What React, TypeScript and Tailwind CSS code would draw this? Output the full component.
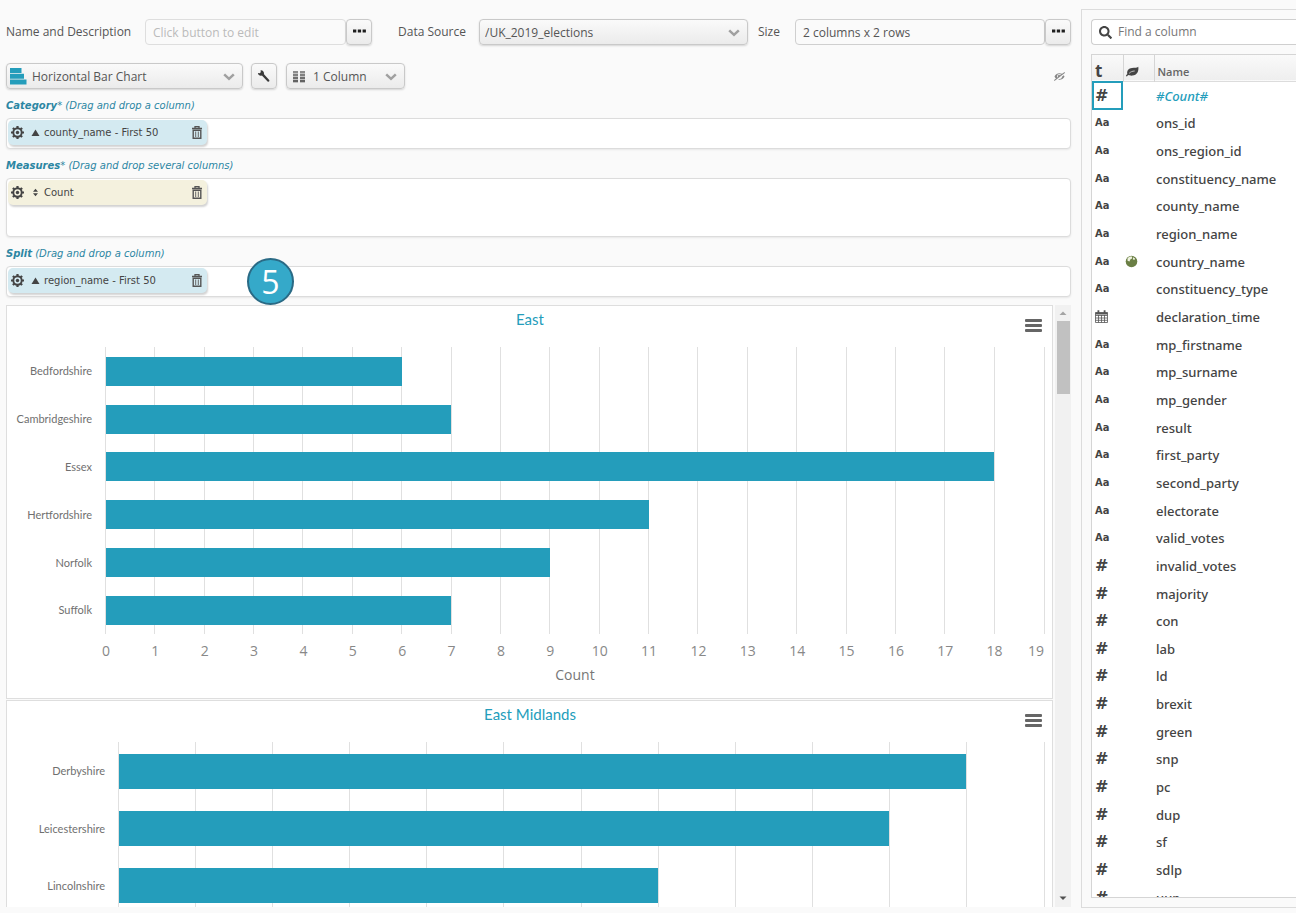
import React from "react";
import { FaSearch, FaEyeSlash } from "react-icons/fa";

const inputBase =
  "h-full w-full rounded-[4px] border bg-transparent px-[7px] text-[#555] outline-none";
const buttonBase =
  "flex h-[26px] w-[26px] shrink-0 items-center justify-center rounded-[4px] border border-[#c9c9c9] bg-linear-to-b from-[#fafafa] to-[#ebebeb] text-[#222] shadow-[0_1px_2px_rgba(0,0,0,0.15)]";
const selectBase =
  "h-[26px] w-full appearance-none rounded-[4px] border border-[#c9c9c9] bg-linear-to-b from-[#fafafa] to-[#ebebeb] pt-[2px] text-[#555] shadow-[0_1px_2px_rgba(0,0,0,0.15)] outline-none";

function Chevron() {
  return (
    <svg className="pointer-events-none absolute top-[10px] right-[8px]" width="12" height="8" viewBox="0 0 12 8" aria-hidden="true">
      <path d="M1.200 1.300 6 5.800l4.800-4.500" fill="none" stroke="#a0a0a0" strokeWidth="2.500" />
    </svg>
  );
}

function Dots() {
  return (
    <svg className="mb-[2px]" width="13" height="4" viewBox="0 0 13 4" aria-hidden="true">
      <path d="M0 .5h3.300v3H0zM4.800.5h3.300v3H4.800zM9.600.5h3.300v3H9.600z" fill="#1f1f1f" />
    </svg>
  );
}

function Wrench() {
  return (
    <svg width="14" height="14" viewBox="0 0 14 14" aria-hidden="true">
      <path
        d="M3.600 1.200 3.800 3.300 2.700 4.300.9 4.100C1.200 6.200 3 7.200 4.900 6.600L10.600 12.400C11.600 13.200 13 12 12.200 10.900L7 5.200C7.400 2.900 5.800 1 3.600 1.200z"
        fill="#3a3a3a"
      />
    </svg>
  );
}

function Leaf() {
  return (
    <svg width="13" height="11" viewBox="0 0 13 11" aria-label="Geographic">
      <path d="M0 9.700C.3 8.800 1 8.400 1.300 8 .6 4.500 2.600 2.400 6 2 8.500 1.700 10.800 2.200 12.300.8 13 5.500 11 9.200 6.500 9.600 4.500 9.800 3.300 9.300 2.300 9 1.700 9.400 1.400 10.200.6 10.500z" fill="#444" />
      <path d="M3.200 7.300C4.600 5.800 6.300 5.100 8.700 5" fill="none" stroke="#ddd" strokeWidth="0.8" />
    </svg>
  );
}

function BarsIcon() {
  return (
    <svg className="pointer-events-none absolute top-[5px] left-[4px]" width="17" height="17" viewBox="0 0 17 17" aria-hidden="true">
      <path d="M0 0h11.500v5H0zM0 5.700h14v5H0zM0 11.400h16.500v5H0z" fill="#249dbb" />
    </svg>
  );
}

function ColumnsIcon() {
  return (
    <svg className="pointer-events-none absolute top-[8px] left-[7px]" width="12" height="12" viewBox="0 0 12 12" aria-hidden="true">
      {[0, 3, 6, 9].map((y, i) => (
        <path key={y} d={`M0 ${y}h5v2H0zM7 ${y}h5v2H7z`} fill={["#999", "#858585", "#6a6a6a", "#555"][i]} />
      ))}
      <path d="M0 0h5v12H0zM7 0h5v12H7z" fill="#777" opacity="0.4" />
    </svg>
  );
}

function Gear() {
  return (
    <svg width="13" height="13" viewBox="0 0 13 13" aria-hidden="true">
      <g stroke="#444" fill="none">
        <circle cx="6.5" cy="6.5" r="4.200" strokeWidth="1.9" />
        {[0, 45, 90, 135, 180, 225, 270, 315].map((a) => (
          <path key={a} d="M6.500 0v2" strokeWidth="2.200" transform={`rotate(${a} 6.5 6.5)`} />
        ))}
      </g>
      <circle cx="6.5" cy="6.5" r="1.700" fill="#444" />
    </svg>
  );
}

function Trash() {
  return (
    <svg width="10" height="13" viewBox="0 0 10 13" aria-hidden="true">
      <path d="M0 2.500h10M3 2V.7h4V2" fill="none" stroke="#555" strokeWidth="1.3" />
      <path d="M1.200 4.200h7.600v8H1.200z" fill="none" stroke="#555" strokeWidth="1.4" />
      <path d="M3.700 5.500v5.500M6.300 5.500v5.500" stroke="#666" strokeWidth="1" />
    </svg>
  );
}

function Calendar() {
  return (
    <svg className="block" width="13" height="13" viewBox="0 0 13 13" aria-label="Date">
      <path d="M.5 2.500h12v10H.5zM.5 5.500h12M.5 8h12M.5 10.300h12M3.500 5v7.500M6.500 5v7.500M9.500 5v7.500" fill="none" stroke="#555" strokeWidth="0.8" />
      <path d="M.5 2.500h12v2H.5zM2.500.3h1.800v3H2.500zM8.700.3h1.800v3H8.700z" fill="#555" />
    </svg>
  );
}

function Globe() {
  return (
    <svg className="block" width="13" height="13" viewBox="0 0 13 13" aria-label="Geographic">
      <circle cx="6.5" cy="6.5" r="5.800" fill="#6b7f45" />
      <path d="M2.500 3.500C4 1.600 6 1.200 7.200 1.800L7 3.500 5.300 4.500 4.500 6.500 2.500 5.800zM8.200 2.300l2 1.500-1 1.200-1.400-.8z" fill="#eef2df" />
    </svg>
  );
}

function SortMark({ kind }: { kind: "asc" | "both" }) {
  return (
    <svg width="9" height="9" viewBox="0 0 9 9" aria-hidden="true">
      <path d={kind === "asc" ? "M.5 8 4.500 1.500 8.500 8z" : "M2 3.700 4.500.8 7 3.700zM2 5.300 4.500 8.200 7 5.300z"} fill="#444" />
    </svg>
  );
}

function DropZone({
  title,
  hint,
  chip,
  sort,
  chipColor,
  boxHeight,
  children,
}: {
  title: string;
  hint: string;
  chip: string;
  sort: "asc" | "both";
  chipColor: string;
  boxHeight: string;
  children?: React.ReactNode;
}) {
  return (
    <section className="pt-[9px] font-['DejaVu_Sans',sans-serif] text-[10px]">
      <h2 className="mb-1 h-4 leading-4 italic text-[#2c86a3]">
        <b>{title.replace("*", "")}</b>
        {title.endsWith("*") ? "*" : ""} {hint}
      </h2>
      <div className={`relative rounded-[4px] border border-[#dcdcdc] bg-white p-px shadow-[0_1px_2px_rgba(0,0,0,0.08)] ${boxHeight}`}>
        <div className={`flex h-[25px] w-[199px] items-center rounded-[5px] pr-[5px] pl-[3px] text-[#444] shadow-[1px_2px_2px_rgba(0,0,0,0.18)] ${chipColor}`}>
          <button type="button" aria-label={`${chip} settings`}><Gear /></button>
          <span className="ml-[7px]"><SortMark kind={sort} /></span>
          <span className="ml-1 flex-1">{chip}</span>
          <button type="button" aria-label={`Remove ${chip}`}><Trash /></button>
        </div>
        {children}
      </div>
    </section>
  );
}

type Chart = {
  title: string;
  left: number;
  max: number;
  slots: number;
  bar: number;
  data: [string, number][];
  axis: boolean;
};

const charts: Chart[] = [
  {
    title: "East",
    left: 99,
    max: 19,
    slots: 6,
    bar: 29,
    axis: true,
    data: [
      ["Bedfordshire", 6],
      ["Cambridgeshire", 7],
      ["Essex", 18],
      ["Hertfordshire", 11],
      ["Norfolk", 9],
      ["Suffolk", 7],
    ],
  },
  {
    title: "East Midlands",
    left: 112,
    max: 12,
    slots: 5,
    bar: 35,
    axis: false,
    data: [
      ["Derbyshire", 11],
      ["Leicestershire", 10],
      ["Lincolnshire", 7],
    ],
  },
];

function ChartCard({ chart }: { chart: Chart }) {
  const right = 1037;
  const top = 41;
  const height = 287;
  const unit = (right - chart.left) / chart.max;
  const slot = height / chart.slots;
  const ticks = Array.from({ length: chart.max + 1 }, (_, i) => i);
  return (
    <article className="relative mb-px shrink-0 border border-[#dedede] bg-white">
      <svg className="block h-auto w-full" viewBox="0 0 1045 392" role="img" aria-label={chart.title}>
        <text x="523" y="19" textAnchor="middle" className="fill-[#249dbb] font-[Lato,sans-serif] text-[15px]">
          {chart.title}
        </text>
        {ticks.map((t) => (
          <rect key={t} x={Math.round(chart.left + t * unit) - (t === chart.max ? 0 : 1)} y={top} width="1" height={height} fill="#e0e0e0" />
        ))}
        {chart.data.map(([name, value], i) => (
          <g key={name}>
            <rect
              x={chart.left}
              y={Math.round(top + slot * (i + 0.5) - chart.bar / 2 + 0.4)}
              width={Math.round(value * unit - 0.5)}
              height={chart.bar}
              fill="#249dbb"
            />
            <text x={chart.left - 14} y={Math.round(top + slot * (i + 0.5) + 0.4) + 4} textAnchor="end" className="fill-[#707070] font-[Lato,sans-serif] text-[11px]">
              {name}
            </text>
          </g>
        ))}
        {chart.axis && (
          <g className="fill-[#888] font-['Open_Sans',sans-serif] text-[14px]">
            {ticks.map((t) => (
              <text key={t} x={t === chart.max ? right : chart.left + t * unit} y="350" textAnchor={t === chart.max ? "end" : "middle"}>
                {t}
              </text>
            ))}
            <text x="568" y="374" textAnchor="middle" className="fill-[#777]">Count</text>
          </g>
        )}
      </svg>
      <button type="button" aria-label={`${chart.title} chart menu`} className="absolute top-[13px] right-[10px] flex w-[17px] flex-col gap-[2px]">
        <span className="h-[3px] rounded-[1px] bg-[#666]" />
        <span className="h-[3px] rounded-[1px] bg-[#666]" />
        <span className="h-[3px] rounded-[1px] bg-[#666]" />
      </button>
    </article>
  );
}

const textColumns = "ons_id ons_region_id constituency_name county_name region_name country_name constituency_type declaration_time mp_firstname mp_surname mp_gender result first_party second_party electorate valid_votes".split(" ");
const numberColumns = "invalid_votes majority con lab ld brexit green snp pc dup sf sdlp uup".split(" ");

function TypeMark({ name, numeric }: { name: string; numeric: boolean }) {
  if (name === "declaration_time") return <Calendar />;
  return numeric ? (
    <span className="block h-4 font-['DejaVu_Sans',sans-serif] text-[16px] leading-4 font-bold">#</span>
  ) : (
    <span className="block h-4 font-['DejaVu_Sans_Condensed','Open_Sans',sans-serif] text-[11px] leading-4 font-bold">Aa</span>
  );
}

function ColumnPanel() {
  const rows = [
    { name: "#Count#", numeric: true },
    ...textColumns.map((name) => ({ name, numeric: false })),
    ...numberColumns.map((name) => ({ name, numeric: true })),
  ];
  return (
    <aside className="flex w-[215px] shrink-0 flex-col border-y border-l border-[#dcdcdc] pt-[9px] pb-[9px] pl-[9px]">
      <label className="flex h-[26px] shrink-0 items-center rounded-l-[4px] border-y border-l border-[#cfcfcf] bg-white pl-[7px] text-[#444]">
        <FaSearch size={13} className="shrink-0" />
        <input aria-label="Find a column" placeholder="Find a column" className="ml-[6px] w-full min-w-0 bg-transparent outline-none placeholder:text-[#777]" />
      </label>
      <div className="mt-[9px] min-h-0 flex-1 overflow-hidden border-y border-l border-[#d5d5d5] bg-white">
        <table className="h-[857px] w-full table-fixed border-collapse text-left text-[13px] text-[#444]">
          <thead>
            <tr className="h-[26px] border-b border-[#dcdcdc] bg-linear-to-b from-[#fafafa] to-[#eee] text-[11px]">
              <th className="h-[26px] w-[31px] border-r border-[#d5d5d5] p-0 pt-[7px] pl-[3px] text-[17px] leading-4">t</th>
              <th className="w-[31px] border-r border-[#d5d5d5] p-0 pt-[7px] pl-[2px]"><Leaf /></th>
              <th className="p-0 pt-2 pl-[3px] font-semibold text-[#666]">Name</th>
            </tr>
          </thead>
          <tbody className="font-['Noto_Sans',sans-serif]">
            {rows.map(({ name, numeric }, i) => (
              <tr key={name} className="leading-4">
                <td className={i === 0 ? "p-0 pl-[3px] outline-2 -outline-offset-2 outline-[#249dbb]" : "p-0 pl-[3px]"}>
                  <TypeMark name={name} numeric={numeric} />
                </td>
                <td className="p-0 pl-[2px]">{name === "country_name" && <Globe />}</td>
                <td className={i === 0 ? "p-0 pl-[2px] font-medium italic text-[#249dbb]" : "p-0 pl-[2px] font-medium"}>{name}</td>
              </tr>
            ))}
          </tbody>
        </table>
      </div>
    </aside>
  );
}

export default function App() {
  return (
    <div className="flex h-screen gap-[10px] overflow-hidden bg-[#fafafa] pl-[6px] font-['Open_Sans',sans-serif] text-[12px] text-[#555]">
      <main className="flex min-w-0 flex-1 flex-col pt-[19px] pb-[6px]">
        <div className="flex h-[26px] items-center">
          <label htmlFor="name" className="w-[139px] shrink-0">Name and Description</label>
          <div className="h-full min-w-0 flex-[201_1_0%]">
            <input id="name" placeholder="Click button to edit" className={`${inputBase} border-[#dedede] placeholder:text-[#bbb]`} />
          </div>
          <button type="button" aria-label="Edit name" className={buttonBase}><Dots /></button>
          <label htmlFor="source" className="ml-[26px] w-[81px] shrink-0">Data Source</label>
          <div className="relative min-w-0 flex-[269_1_0%]">
            <select id="source" className={`${selectBase} pl-[5px]`}>
              <option>/UK_2019_elections</option>
            </select>
            <Chevron />
          </div>
          <label htmlFor="size" className="ml-[10px] w-[37px] shrink-0">Size</label>
          <div className="h-full min-w-0 flex-[250_1_0%]">
            <input id="size" defaultValue="2 columns x 2 rows" className={`${inputBase} border-[#cfcfcf]`} />
          </div>
          <button type="button" aria-label="Edit size" className={buttonBase}><Dots /></button>
        </div>

        <div className="mt-[18px] flex h-[26px] items-center">
          <div className="relative w-[237px]">
            <select aria-label="Chart type" className={`${selectBase} pl-[25px]`}>
              <option>Horizontal Bar Chart</option>
            </select>
            <BarsIcon />
            <Chevron />
          </div>
          <button type="button" aria-label="Chart settings" className={`${buttonBase} ml-[8px]`}>
            <Wrench />
          </button>
          <div className="relative ml-[9px] w-[119px]">
            <select aria-label="Column count" className={`${selectBase} pl-[26px]`}>
              <option>1 Column</option>
            </select>
            <ColumnsIcon />
            <Chevron />
          </div>
          <button type="button" aria-label="Hide preview" className="mr-[6px] ml-auto text-[#888]"><FaEyeSlash size={11} className="-scale-x-100" /></button>
        </div>

        <DropZone title="Category*" hint="(Drag and drop a column)" chip="county_name - First 50" sort="asc" chipColor="bg-[#d4eaf1]" boxHeight="h-[31px]" />
        <DropZone title="Measures*" hint="(Drag and drop several columns)" chip="Count" sort="both" chipColor="bg-[#f4f1de]" boxHeight="h-[59px]" />
        <DropZone title="Split" hint="(Drag and drop a column)" chip="region_name - First 50" sort="asc" chipColor="bg-[#d4eaf1]" boxHeight="h-[31px]">
          <span className="absolute top-[-9px] left-[240px] z-10 flex h-[47px] w-[47px] items-center justify-center rounded-full border-2 border-[#2a6a85] bg-[#35a9c9] font-['Open_Sans',sans-serif] text-[32px] text-white">
            5
          </span>
        </DropZone>

        <div className="mt-[8px] flex min-h-0 flex-1">
          <div className="flex min-w-0 flex-1 flex-col overflow-hidden">
            {charts.map((chart) => (
              <ChartCard key={chart.title} chart={chart} />
            ))}
          </div>
          <div className="ml-[2px] flex w-[16px] flex-col items-center bg-[#f1f1f1]" aria-hidden="true">
            <svg width="8" height="16" viewBox="0 0 8 16"><path d="M.5 10 4 6.500 7.500 10z" fill="#a3a3a3" /></svg>
            <div className="h-[73px] w-[13px] bg-[#c1c1c1]" />
            <svg className="mt-auto" width="8" height="17" viewBox="0 0 8 17"><path d="M.5 6.500 4 10 7.500 6.500z" fill="#505050" /></svg>
          </div>
        </div>
      </main>
      <div className="flex min-h-0 shrink-0 pt-[9px] pb-[5px]">
        <ColumnPanel />
      </div>
    </div>
  );
}
